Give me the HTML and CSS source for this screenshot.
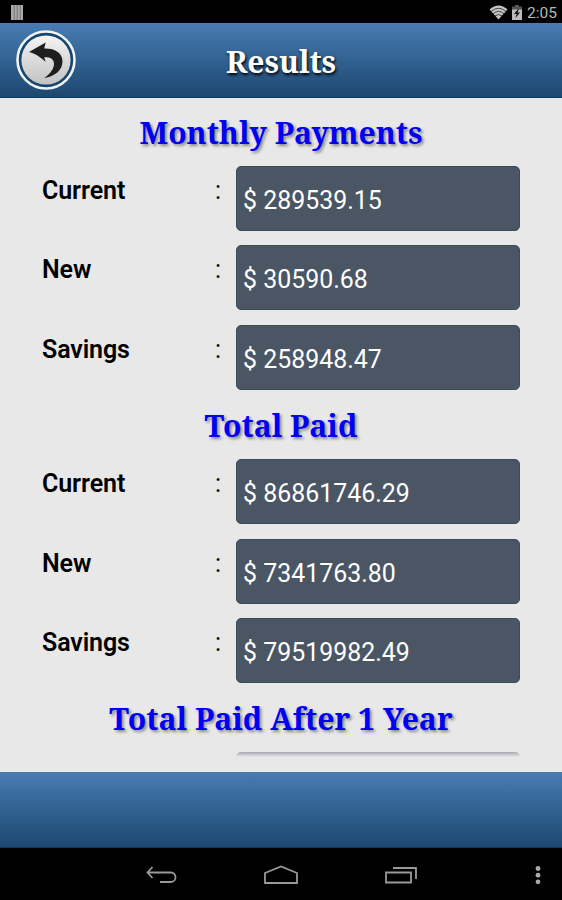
FILE: index.html
```html
<!DOCTYPE html>
<html lang="en">
<head>
  <meta charset="UTF-8" />
  <meta name="viewport" content="width=device-width, initial-scale=1.0"/>
  <title>Results</title>
  <link rel="stylesheet" href="styles.css">
</head>
<body>

  <div class="status-bar">
    <svg class="bars" width="12" height="15" viewBox="0 0 12 15"><path d="M0 0h12v15H0z" fill="#aaa"/><path d="M3.2 0v15M6.2 0v15M9.2 0v15" stroke="#666" stroke-width=".8"/></svg>
    <svg class="wifi" width="19" height="15" viewBox="0 0 19 15">
      <path d="M.5 4.5Q9.5-3.3 18.5 4.5L9.5 14.5z" fill="#c4c4c4"/>
      <path d="M1.800 6.600q7.700-6.600 15.400 0M3.800 8.900q5.700-5 11.400 0M5.800 11q3.700-3 7.400 0" fill="none" stroke="#222" stroke-width=".8"/>
    </svg>
    <svg class="battery" width="10" height="15" viewBox="0 0 10 15"><path d="M3 0h4v1.500h3V5H0V1.500h3z" fill="#555"/><path d="M0 4.500h10V15H0z" fill="#bbb"/><path d="M7 3L2 9h2.600L3.500 13 8 7.500H5.600z" fill="#111"/></svg>
    <span class="clock">2:05</span>
  </div>

  <header>
    <a class="back" href="#" aria-label="Back">
      <svg width="60" height="60" viewBox="0 0 60 60">
        <defs>
          <linearGradient id="silver" x1="0" y1="0" x2="0" y2="1"><stop offset="0" stop-color="#f4f4f4"/><stop offset="1" stop-color="#c2c2c2"/></linearGradient>
        </defs>
        <circle cx="30" cy="30" r="28.500" fill="#16466f" stroke="#f0f2f4" stroke-width="2.600"/>
        <circle cx="30" cy="30" r="24.600" fill="url(#silver)"/>
        <path d="M13 22L29.700 12.500l-1.500 6C39.500 18.300 46.500 23 46.500 31.500 46.500 40 39 46.500 28 48c6.500-4 10-9.500 10-14.200 0-5-4-6.800-9.800-6.600l1.500 4.800c-5-4.500-9.500-8-16.700-10z" fill="#1e1e1e"/>
      </svg>
    </a>
    <h1>Results</h1>
  </header>

  <main>
    <div class="results">
      <section>
        <h2>Monthly Payments</h2>
        <div class="row"><label>Current</label><span class="colon">:</span><div class="field">$ 289539.15</div></div>
        <div class="row"><label>New</label><span class="colon">:</span><div class="field">$ 30590.68</div></div>
        <div class="row"><label>Savings</label><span class="colon">:</span><div class="field">$ 258948.47</div></div>
      </section>

      <section>
        <h2>Total Paid</h2>
        <div class="row"><label>Current</label><span class="colon">:</span><div class="field">$ 86861746.29</div></div>
        <div class="row"><label>New</label><span class="colon">:</span><div class="field">$ 7341763.80</div></div>
        <div class="row"><label>Savings</label><span class="colon">:</span><div class="field">$ 79519982.49</div></div>
      </section>

      <section>
        <h2>Total Paid After 1 Year</h2>
        <div class="row"><span class="field faded"></span></div>
      </section>
    </div>
  </main>

  <footer></footer>

  <nav>
    <svg width="32" height="20" viewBox="0 0 32 20"><path d="M7.500 2L2.500 7.500l5 5.500M2.500 7.500H26c6 0 6 9.500 0 9.500H15"/></svg>
    <svg width="34" height="20" viewBox="0 0 34 20"><path d="M1 18V8L17 1.500 33 8v10z"/></svg>
    <svg width="32" height="20" viewBox="0 0 32 20"><path d="M1 7.500h25v10H1zM8 3h23v11"/></svg>
    <svg class="more" width="6" height="20" viewBox="0 0 6 20"><circle cx="3" cy="3.500" r="2.400"/><circle cx="3" cy="10.200" r="2.400"/><circle cx="3" cy="16.800" r="2.400"/></svg>
  </nav>

</body>
</html>
```
FILE: styles.css
```css
* {
  box-sizing: border-box;
}

body {
  font-family: Roboto, sans-serif;
  background: #e8e8e8;
  color: #000;
  margin: 0;
  height: 900px;
  display: flex;
  flex-direction: column;
  overflow: hidden;
}

.status-bar {
  height: 23px;
  flex: none;
  background: #000;
  display: flex;
  align-items: center;
  padding: 1px 6px 0 11px;
}

.wifi {
  margin-left: auto;
  margin-right: 4px;
}

.clock {
  color: #b8b8b8;
  font-size: 15.5px;
  line-height: 22px;
  width: 29px;
  margin-left: 5px;
  margin-top: 1px;
}

header,
footer {
  background: linear-gradient(#487cb3, #1c4770);
  border-bottom: 1px solid #103960;
  flex: none;
}

header {
  height: 75px;
  display: grid;
  grid-template-columns: 60px 1fr 60px;
  align-items: center;
  padding: 0 16px;
}

.back svg {
  display: block;
}

h1,
h2 {
  font-family: "Noto Serif", "Droid Serif", "DejaVu Serif Condensed", "DejaVu Serif", serif;
  font-weight: bold;
  font-stretch: condensed;
  text-align: center;
  white-space: nowrap;
  margin: 0;
}

h1 {
  color: #fff;
  font-size: 30px;
  line-height: 40px;
  padding-top: 4px;
  text-shadow: 1px 2px 3px #000;
}

main {
  height: 674px;
  flex: none;
}

.results {
  height: 659px;
  overflow: hidden;
}

section {
  height: 293.2px;
}

h2 {
  color: #0000f8;
  font-size: 30.1px;
  line-height: 68px;
  height: 68px;
  padding-top: 1px;
  text-shadow: 2px 2px 3px #888;
}

.row {
  display: grid;
  grid-template-columns: 173px 20.5px 284px;
  grid-template-rows: 65px;
  height: 65px;
  margin: 0 0 14.4px 42px;
}

.row label {
  font-size: 25px;
  font-weight: 600;
  letter-spacing: -0.1px;
  line-height: 50px;
}

.colon {
  font-size: 25px;
  line-height: 50px;
}

.field {
  grid-column: 3;
  background: #4a5663;
  border: 1px solid #3a4b5a;
  border-radius: 5px;
  color: #fff;
  font-size: 24.9px;
  line-height: 67px;
  padding-left: 6.6px;
}

.faded {
  background: linear-gradient(#a5a9ad, #e8e8e8 5px);
  border: none;
}

footer {
  height: 76px;
}

nav {
  flex: 1;
  background: #000;
  display: grid;
  grid-template-columns: 32px 34px 32px 6px;
  column-gap: 87px;
  align-items: center;
  padding-left: 145px;
  padding-top: 1px;
}

nav svg {
  fill: none;
  stroke: #999;
  stroke-width: 1.8;
}

nav .more {
  fill: #aaa;
  stroke: none;
  margin-left: 31px;
}
```
